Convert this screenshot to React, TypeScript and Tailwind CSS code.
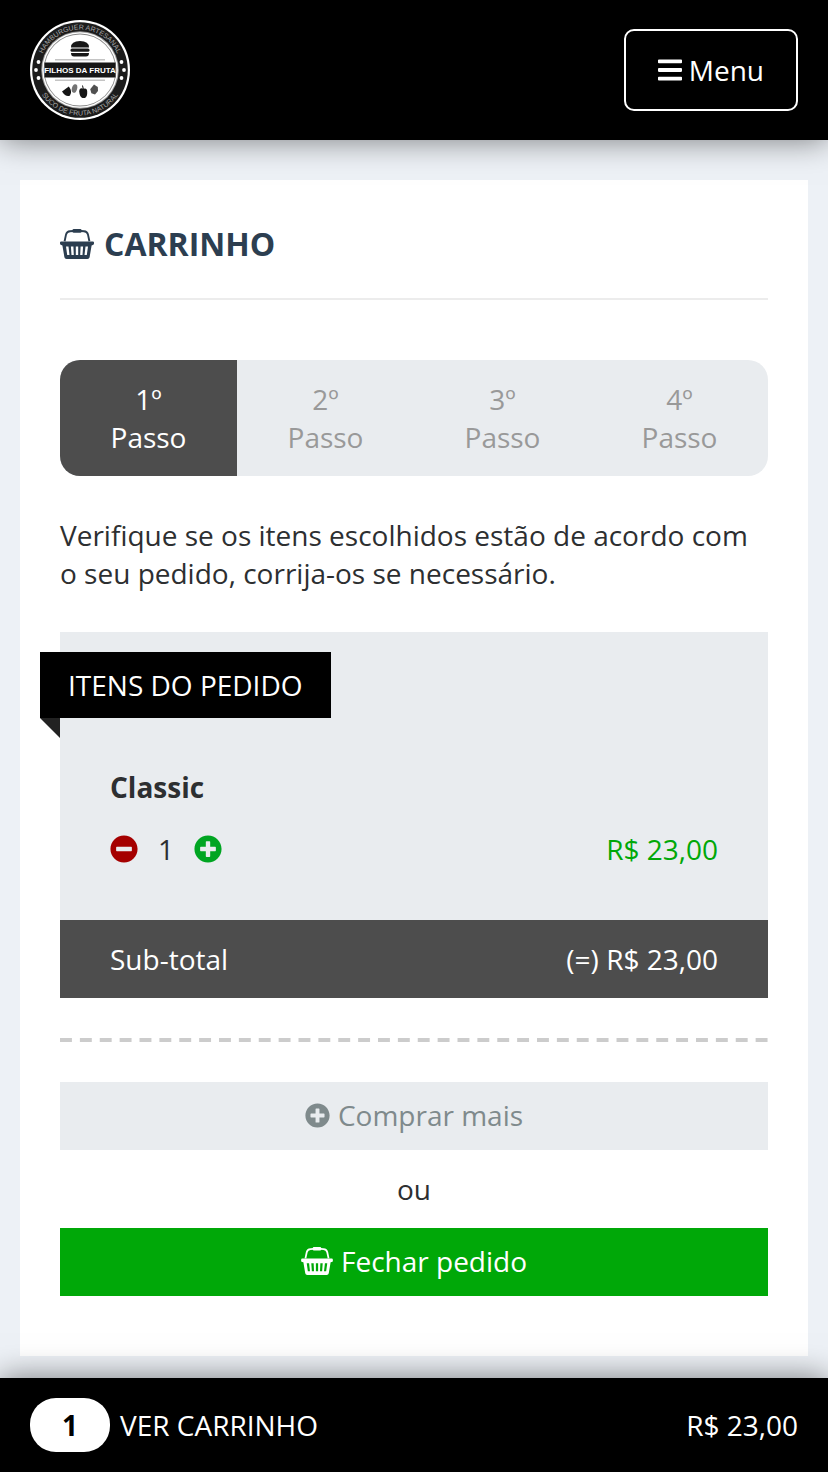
import type { ReactNode } from "react";
import { FaBars, FaMinusCircle, FaPlusCircle } from "react-icons/fa";
import { clsx } from "clsx";

const steps = ["1º", "2º", "3º", "4º"];

const items = [{ name: "Classic", quantity: 1, price: "R$ 23,00" }];

function BasketIcon({ className }: { className?: string }) {
  return (
    <svg viewBox="0 0 34 30" className={className} fill="none" aria-hidden="true">
      <path d="M4.6 12.2 6 5.6Q6.7 2.4 10 2.2L13 2M29.4 12.2 28 5.6Q27.3 2.4 24 2.2L21 2" stroke="currentColor" strokeWidth="1.9" />
      <rect x="12.4" y="0" width="9.2" height="3.8" rx="1.4" fill="currentColor" />
      <path
        fillRule="evenodd"
        fill="currentColor"
        d="M1.2 12.4H32.8Q34 12.4 34 13.6V14.6Q34 15.8 32.8 16L31.6 16.4 29.6 28.2Q29.3 30 27.4 30H6.6Q4.7 30 4.4 28.2L2.4 16.4 1.2 16Q0 15.8 0 14.6V13.6Q0 12.4 1.2 12.4ZM6 17.4 7.2 26H9.5L8.5 17.4ZM10.9 17.4 11.5 26H13.8L13.4 17.4ZM15.8 17.4V26H18.2V17.4ZM20.6 17.4 20.2 26H22.5L23.1 17.4ZM25.5 17.4 24.5 26H26.8L28 17.4Z"
      />
    </svg>
  );
}

function Logo() {
  return (
    <svg viewBox="0 0 100 100" className="size-[100px]" role="img" aria-label="Filhos da Fruta">
      <defs>
        <path id="logo-top" d="M9.5 50A40.5 40.5 0 0 1 90.5 50" />
        <path id="logo-bottom" d="M4.5 50A45.5 45.5 0 0 0 95.5 50" />
      </defs>
      <circle cx="50" cy="50" r="50" fill="#fff" />
      <circle cx="50" cy="50" r="47.8" fill="#1c1c1c" />
      <circle cx="50" cy="50" r="38.8" fill="#999" />
      <circle cx="50" cy="50" r="37.8" fill="#fff" />
      <circle cx="50" cy="50" r="36.4" fill="#888" />
      <circle cx="50" cy="50" r="35.6" fill="#fff" />
      <g fill="#a8a8a8" fontFamily="'Liberation Sans Narrow', 'Liberation Sans', sans-serif" fontSize="7" textAnchor="middle">
        <text>
          <textPath href="#logo-top" startOffset="50%">HAMBURGUER ARTESANAL</textPath>
        </text>
        <text>
          <textPath href="#logo-bottom" startOffset="50%">SUCO DE FRUTA NATURAL</textPath>
        </text>
      </g>
      <g fill="#fff">
        <circle cx="8.5" cy="42" r="1.9" />
        <circle cx="6" cy="50" r="1.9" />
        <circle cx="8.5" cy="58" r="1.9" />
        <circle cx="91.5" cy="42" r="1.9" />
        <circle cx="94" cy="50" r="1.9" />
        <circle cx="91.5" cy="58" r="1.9" />
      </g>
      <g fill="#161616">
        <path d="M41 27.5Q41 21 50 21T59 27.5Z" />
        <rect x="40.5" y="28.4" width="19" height="3.4" rx="1.5" />
        <path d="M41 33H59Q59 36.5 56 36.5H44Q41 36.5 41 33Z" />
        <path d="M25 39.5H75V40.2H25ZM25 59.8H75V60.5H25Z" opacity=".5" />
        <path d="M14.5 42.5H85.5V57.5H14.5Z" />
        <path d="M32 71.5 38.8 66.5Q42.8 71.5 40 75.5 36 77.5 32 71.5Z" />
        <ellipse cx="44.5" cy="68.5" rx="2.6" ry="4.4" transform="rotate(15 44.5 68.5)" opacity=".6" />
        <path d="M53.5 68.8Q49.5 67 49.2 71.5 49.7 77 52.5 78H55Q57.5 76.5 57.2 71.5 57 67.5 53.5 68.8Z" />
        <path d="m53.3 69-.8-3.5" stroke="#161616" />
        <path d="m64 64.5 3.8 2.5.2 4-3 3.5-3.6-1.2-1.2-4Z" opacity=".75" />
      </g>
      <text x="50" y="53" fill="#fff" fontFamily="'Liberation Sans Narrow', 'Liberation Sans', sans-serif" fontWeight="700" fontSize="8" textAnchor="middle">
        FILHOS DA FRUTA
      </text>
    </svg>
  );
}

function ActionLink({ className, children }: { className: string; children: ReactNode }) {
  return (
    <a href="#" className={clsx("flex items-center justify-center gap-2 pt-[14px] pb-4", className)}>
      {children}
    </a>
  );
}

export default function App() {
  return (
    <div className="flex min-h-screen flex-col bg-[#edf1f6] font-['Open_Sans','Noto_Sans',sans-serif] text-[28px] leading-[38px] text-[#2d2f31]">
      <header className="sticky top-0 z-10 flex items-center justify-between bg-black px-[30px] py-5 shadow-[0_0_30px_rgba(0,0,0,0.5)]">
        <a href="#">
          <Logo />
        </a>
        <button type="button" className="flex items-center gap-[7px] rounded-[10px] border-2 border-white px-8 py-5 text-white">
          <FaBars className="h-7 w-6" />
          Menu
        </button>
      </header>

      <main className="mx-5 mt-10 mb-[22px] bg-white px-10 pt-10 pb-[60px]">
        <h1 className="flex items-center gap-[10px] border-b-2 border-[#ececec] pb-[30px] text-[32px] leading-[48px] font-bold text-[#2c3e50]">
          <BasketIcon className="h-[30px] w-[34px]" />
          CARRINHO
        </h1>

        <ol className="mt-[60px] grid grid-cols-4 overflow-hidden rounded-[20px] bg-[#e9ecef] text-center text-[#999]">
          {steps.map((step, index) => (
            <li key={step} className={clsx("py-5", index === 0 && "bg-[#4d4d4d] text-white")}>
              {step}
              <br />
              Passo
            </li>
          ))}
        </ol>

        <p className="my-10">
          Verifique se os itens escolhidos estão de acordo com o seu pedido, corrija-os se necessário.
        </p>

        <section className="bg-[#e9ecef] pt-5">
          <h2 className="relative -ml-5 w-fit bg-black px-7 py-[14px] text-white">
            ITENS DO PEDIDO
            <span className="absolute top-full left-0 size-5 bg-[#222] [clip-path:polygon(0_0,100%_0,100%_100%)]" />
          </h2>
          {items.map((item) => (
            <div key={item.name} className="px-[50px] pt-[50px] pb-[52px]">
              <h3 className="font-bold">{item.name}</h3>
              <div className="mt-6 flex items-center justify-between">
                <div className="flex items-center gap-5">
                  <button type="button" aria-label="Remover um" className="text-[#a50000]">
                    <FaMinusCircle />
                  </button>
                  <span>{item.quantity}</span>
                  <button type="button" aria-label="Adicionar um" className="text-[#00a522]">
                    <FaPlusCircle />
                  </button>
                </div>
                <span className="text-[#00a808]">{item.price}</span>
              </div>
            </div>
          ))}
          <div className="flex justify-between bg-[#4d4d4d] px-[50px] py-5 text-white">
            <span>Sub-total</span>
            <span>(=) R$ 23,00</span>
          </div>
        </section>

        <div className="my-10 overflow-hidden">
          <div className="-mr-2 h-1 bg-[linear-gradient(to_right,#ccc_60%,transparent_60%)] bg-size-[20px_4px] bg-repeat-round" />
        </div>

        <ActionLink className="bg-[#e9ecef] text-[#7f8a8c]">
          <FaPlusCircle className="size-[25px]" />
          Comprar mais
        </ActionLink>
        <p className="my-5 text-center">ou</p>
        <ActionLink className="bg-[#00a808] text-white">
          <BasketIcon className="h-7 w-8" />
          Fechar pedido
        </ActionLink>
      </main>

      <footer className="sticky bottom-0 z-10 mt-auto bg-black shadow-[0_0_30px_rgba(0,0,0,0.5)]">
        <a href="#" className="flex items-center justify-between px-[30px] py-5 text-white">
          <span className="flex items-center gap-[10px]">
            <span className="w-20 rounded-[26px] bg-white py-2 text-center font-bold text-black">1</span>
            VER CARRINHO
          </span>
          <span>R$ 23,00</span>
        </a>
      </footer>
    </div>
  );
}
